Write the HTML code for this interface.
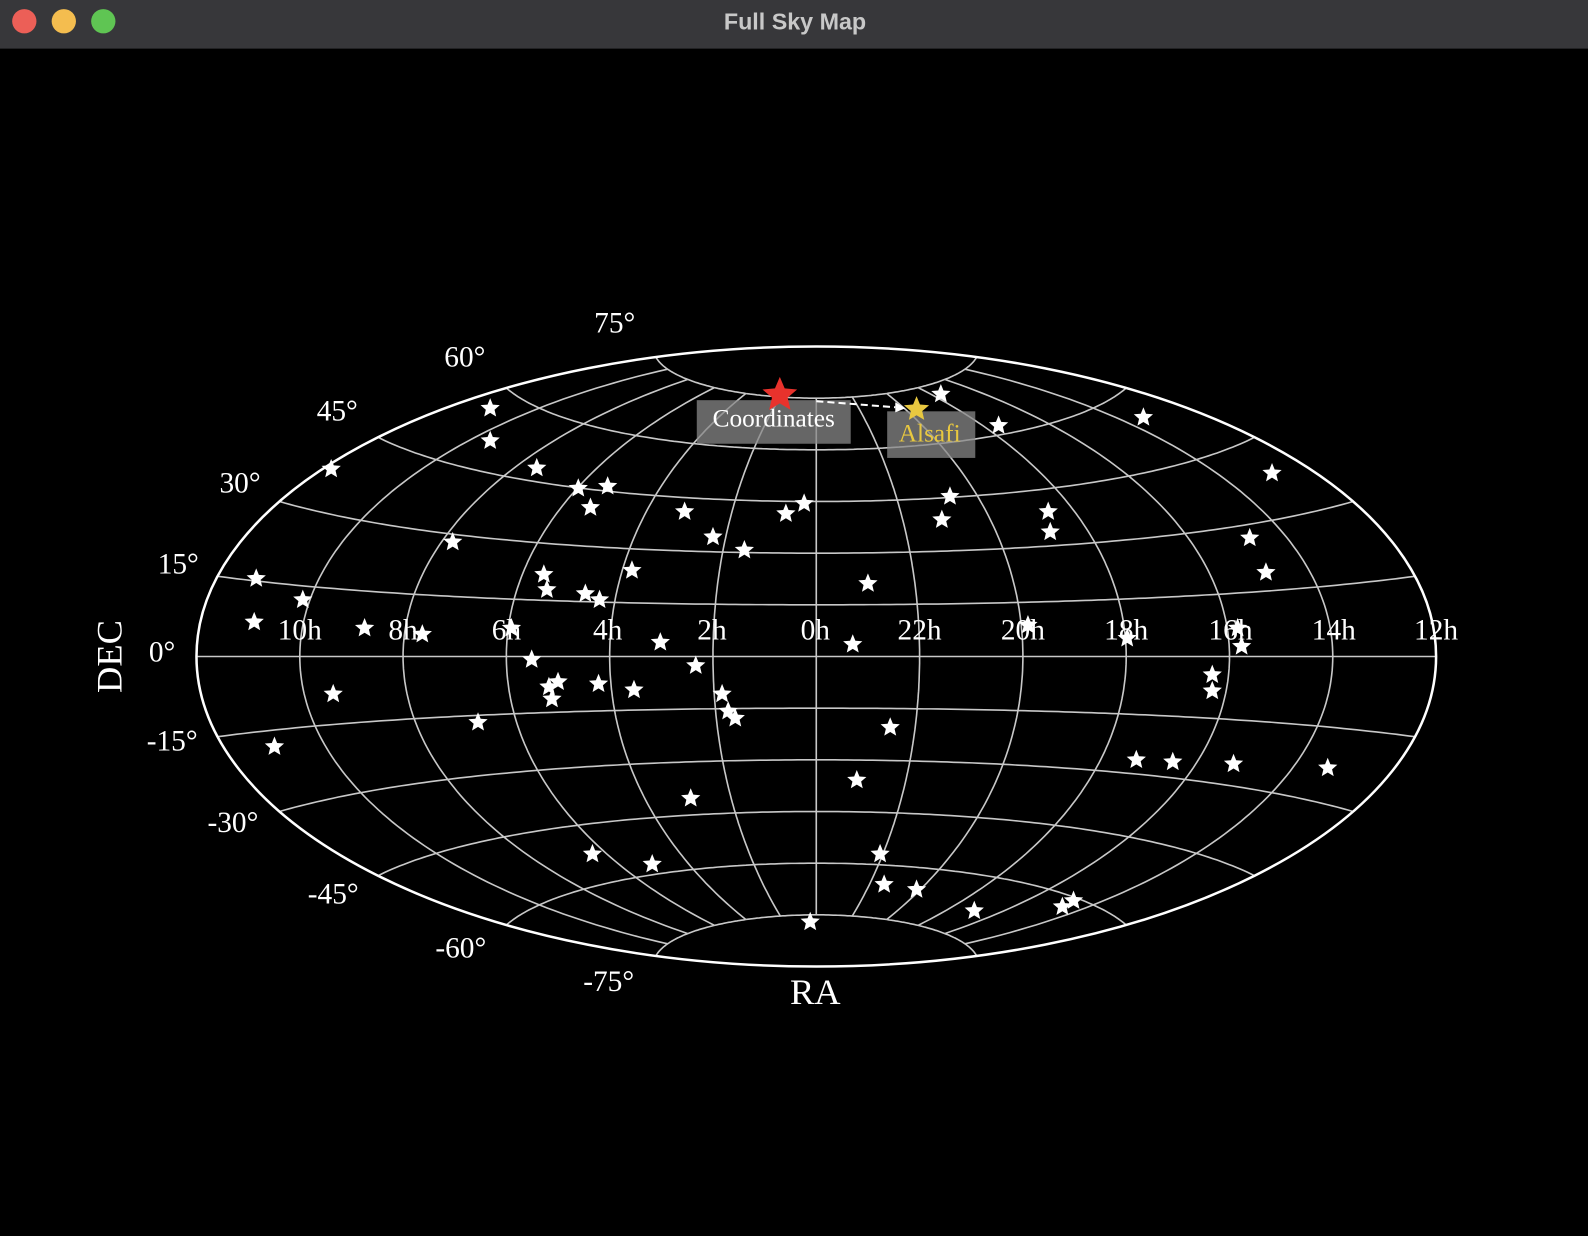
<!DOCTYPE html>
<html><head><meta charset="utf-8"><style>
html,body{margin:0;padding:0;background:#000;width:1588px;height:1236px;overflow:hidden}
svg{display:block}
</style></head><body>
<svg id="s" width="1588" height="1236" viewBox="0 0 1568 1220" preserveAspectRatio="none" xmlns="http://www.w3.org/2000/svg">
<rect width="1568" height="1220" fill="#000"/>
<rect width="1568" height="48" fill="#37373a"/>
<circle cx="24" cy="21" r="12" fill="#ec5f57"/>
<circle cx="63" cy="21" r="12" fill="#f4bd4f"/>
<circle cx="102" cy="21" r="12" fill="#5fc553"/>
<text x="785" y="29" text-anchor="middle" font-family="Liberation Sans, sans-serif" font-weight="bold" font-size="23" fill="#c8c8c8">Full Sky Map</text>
<g id="grid" fill="none" stroke="#c8c8c8" stroke-width="1.6"></g>
<ellipse cx="806" cy="648" rx="612" ry="306" fill="none" stroke="#fff" stroke-width="2.5"/>
<g font-family="Liberation Serif, serif" font-size="29" fill="#fff" text-anchor="middle">
<text x="607" y="328">75°</text><text x="459" y="362">60°</text><text x="333" y="415">45°</text>
<text x="237" y="486">30°</text><text x="176" y="566">15°</text><text x="160" y="653">0°</text>
<text x="170" y="741">-15°</text><text x="230" y="821">-30°</text><text x="329" y="892">-45°</text>
<text x="455" y="945">-60°</text><text x="601" y="978">-75°</text>
<text x="296" y="631">10h</text><text x="398" y="631">8h</text><text x="500" y="631">6h</text>
<text x="600" y="631">4h</text><text x="703" y="631">2h</text><text x="805" y="631">0h</text>
<text x="908" y="631">22h</text><text x="1010" y="631">20h</text><text x="1112" y="631">18h</text>
<text x="1215" y="631">16h</text><text x="1317" y="631">14h</text><text x="1418" y="631">12h</text>
<text x="805" y="991" font-size="36">RA</text>
<text transform="translate(120,648) rotate(-90)" font-size="36">DEC</text>
</g>
<g id="stars" fill="#fff"></g>
<rect x="688" y="395" width="152" height="43" fill="#888" fill-opacity="0.75"/>
<text x="764" y="421" text-anchor="middle" font-family="Liberation Serif, serif" font-size="25" fill="#fff">Coordinates</text>
<rect x="876" y="406" width="87" height="46" fill="#888" fill-opacity="0.75"/>
<text x="918" y="436" text-anchor="middle" font-family="Liberation Serif, serif" font-size="25" fill="#e8c840">Alsafi</text>
<line x1="806" y1="396" x2="884" y2="402" stroke="#fff" stroke-width="2" stroke-dasharray="7,4"/>
<polygon points="884,397 894,403 884,407" fill="#fff"/>
<g id="big"></g>
</svg>
<script>
var S=612/Math.PI,cx=806,cy=648,NS='http://www.w3.org/2000/svg';
function P(l,p){l*=Math.PI/180;p*=Math.PI/180;var a=Math.acos(Math.cos(p)*Math.cos(l/2));var sc=a<1e-9?1:Math.sin(a)/a;
return [cx+S*2*Math.cos(p)*Math.sin(l/2)/sc, cy-S*Math.sin(p)/sc];}
var g=document.getElementById('grid');
function path(pts){var e=document.createElementNS(NS,'path');e.setAttribute('d','M'+pts.map(function(q){return q[0].toFixed(1)+','+q[1].toFixed(1)}).join('L'));g.appendChild(e);}
for(var l=-150;l<=150;l+=30){var a=[];for(var p=-75;p<=75;p+=1)a.push(P(l,p));path(a);}
for(var p=-75;p<=75;p+=15){var a=[];for(var l=-180;l<=180;l+=2)a.push(P(l,p));path(a);}
function star(x,y,r,fill){var pts=[];for(var i=0;i<10;i++){var rr=i%2?r*0.45:r,an=-Math.PI/2+i*Math.PI/5;pts.push((x+rr*Math.cos(an)).toFixed(1)+','+(y+rr*Math.sin(an)).toFixed(1));}
var e=document.createElementNS(NS,'polygon');e.setAttribute('points',pts.join(' '));if(fill)e.setAttribute('fill',fill);return e;}
var st=[[484,403],[484,435],[327,463],[530,462],[571,482],[600,480],[583,501],[676,505],[776,507],[794,497],[704,530],[735,543],[447,535],[253,571],[299,592],[251,614],[360,620],[417,626],[537,567],[540,582],[578,586],[592,592],[624,563],[505,620],[652,634],[525,651],[542,678],[551,673],[545,690],[591,675],[626,681],[687,657],[713,685],[719,702],[726,709],[329,685],[472,713],[271,737],[682,788],[585,843],[644,853],[800,910],[869,843],[873,873],[905,878],[962,899],[1049,895],[1060,889],[846,770],[879,718],[842,636],[857,576],[938,490],[930,513],[929,389],[986,420],[1035,505],[1037,525],[1129,412],[1256,467],[1234,531],[1250,565],[1015,617],[1113,630],[1226,638],[1197,666],[1197,682],[1122,750],[1158,752],[1218,754],[1311,758],[1222,620]];
var sg=document.getElementById('stars');st.forEach(function(q){sg.appendChild(star(q[0],q[1],10));});
var b=document.getElementById('big');b.appendChild(star(770,390,18,'#e8322c'));b.appendChild(star(905,404,13,'#e8c840'));
</script>
</body></html>
